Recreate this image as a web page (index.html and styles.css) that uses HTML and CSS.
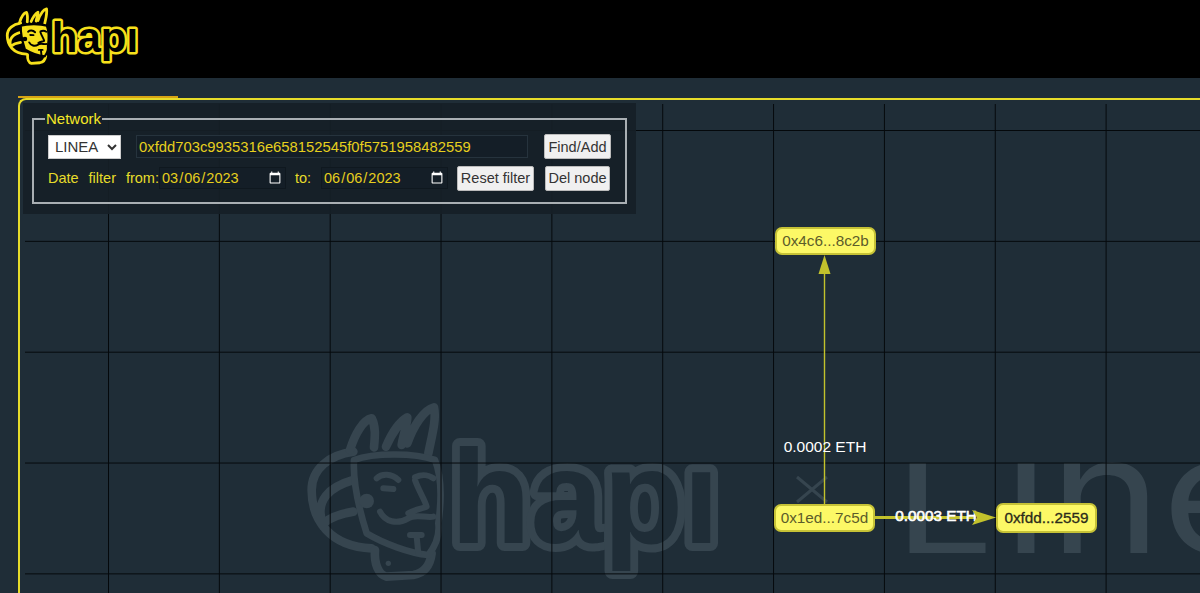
FILE: index.html
```html
<!DOCTYPE html>
<html lang="en">
  <head>
    <meta charset="UTF-8">
    <title>HAPI Explorer</title>
    <link rel="stylesheet" href="styles.css">
  </head>
  <body>
    <header class="topbar">
      <svg class="logo" viewBox="14 34 1252 542" aria-label="hapi">
        <defs>
          <g id="hapi-logo">
            <path class="logo-hair" d="M160,185 C90,195 35,235 35,300 C35,390 90,470 215,475 M160,270 C90,290 40,330 70,410 M160,365 C115,372 88,385 70,400"/>
            <path class="logo-hair" d="M150,180 C165,130 190,90 215,85 C228,110 225,140 222,172 M258,170 C275,130 300,95 322,82 C320,110 310,135 305,165 M322,160 C340,110 370,60 402,52 C410,90 395,140 385,190"/>
            <path class="logo-hair" d="M225,480 C222,520 235,555 260,560 L340,555 C370,550 390,530 395,490"/>
            <path class="logo-face" d="M162,210 C220,188 345,188 405,210 C425,260 425,330 415,400 C420,440 405,470 385,495 C330,490 250,460 200,430 C178,360 158,280 162,210 Z"/>
            <path class="logo-mark" d="M230,265 C245,250 275,250 295,270 M250,295 L280,297 M345,262 C370,250 385,255 400,265 M345,270 C355,300 375,330 380,350 C370,355 340,360 325,370 M240,365 C255,395 290,405 325,385 C345,370 380,385 400,380 M330,435 L365,435 M350,440 L355,490"/>
            <circle class="logo-dot" cx="200" cy="333" r="22"/>
            <circle class="logo-dot" cx="265" cy="520" r="8"/>
            <text class="logo-word" x="452" y="458" textLength="806" lengthAdjust="spacingAndGlyphs">hapı</text>
          </g>
        </defs>
        <use href="#hapi-logo"/>
      </svg>
    </header>

    <main class="workspace">
      <div class="tab-accent"></div>
      <section class="canvas">
        <div class="graph">
          <svg class="graph-svg" viewBox="25 104 1175 489">
            <use class="watermark" href="#hapi-logo" transform="translate(300 390) scale(0.3333)"/>
            <path class="cross" d="M797,477 L827,502 M827,477 L797,502"/>
            <text class="linea linea-l" x="894" y="553" textLength="100" lengthAdjust="spacingAndGlyphs">L</text>
            <text class="linea linea-rest" x="1003" y="553" textLength="270" lengthAdjust="spacingAndGlyphs">ıne</text>
          </svg>

          <div class="grid"></div>

          <svg class="graph-svg" viewBox="25 104 1175 489">
            <line class="edge" x1="824.5" y1="504" x2="824.5" y2="270"/>
            <polygon class="arrow" points="824.5,255 830.5,274 818.5,274"/>
            <text class="edge-label" x="825" y="452">0.0002 ETH</text>

            <line class="edge edge-thick" x1="875" y1="517.5" x2="975" y2="517.5"/>
            <text class="edge-label edge-label-strong" x="936" y="521">0.0003 ETH</text>
            <polygon class="arrow" points="996,517.5 972,510 977,517.5 972,525"/>
          </svg>

          <div class="node node-top">0x4c6...8c2b</div>
          <div class="node node-left">0x1ed...7c5d</div>
          <div class="node node-selected">0xfdd...2559</div>

          <form class="panel">
            <fieldset class="network">
              <legend>Network</legend>
              <div class="row">
                <select class="chain">
                  <option>LINEA</option>
                </select>
                <input class="address" type="text" value="0xfdd703c9935316e658152545f0f5751958482559">
                <button class="btn btn-find" type="button">Find/Add</button>
              </div>
              <div class="row row-dates">
                <label class="date-label" for="date-from"><span>Date</span><span>filter</span><span>from:</span></label>
                <input class="date" id="date-from" type="date" value="2023-03-06">
                <label class="to-label" for="date-to">to:</label>
                <input class="date" id="date-to" type="date" value="2023-06-06">
                <button class="btn btn-reset" type="button">Reset filter</button>
                <button class="btn btn-del" type="button">Del node</button>
              </div>
            </fieldset>
          </form>
        </div>
      </section>
    </main>
  </body>
</html>
```

FILE: styles.css
```css
* {padding: 0; margin: 0; box-sizing: border-box}
html, body {
  height: 100%;
  overflow: hidden;
}
body {
  background: #1f2d37;
  font-family: "Liberation Sans", Arial, sans-serif;
  font-size: 14px;
}

/* header */
.topbar {
  height: 78px;
  background: #000;
  padding: 7px 0 0 5px;
}
.logo {
  display: block;
  width: 134px;
  height: 58px;
  overflow: visible;
  --line: #f7e01b;
  --face: #f7e01b;
  --mark: #000;
  --word: #000;
}
#hapi-logo path, #hapi-logo text {
  stroke-linecap: round;
  stroke-linejoin: round;
}
.logo-hair {
  fill: none;
  stroke: var(--line);
  stroke-width: 26;
}
.logo-face {
  fill: var(--face);
  stroke: var(--mark);
  stroke-width: 20;
}
.logo-mark {
  fill: none;
  stroke: var(--mark);
  stroke-width: 18;
}
.logo-dot {
  fill: var(--mark);
}
.logo-word {
  font-family: "Liberation Sans", Arial, sans-serif;
  font-weight: 700;
  font-size: 400px;
  fill: var(--word);
  stroke: var(--line);
  stroke-width: 48;
  paint-order: stroke;
}

/* canvas */
.workspace {
  padding-top: 18px;
}
.tab-accent {
  width: 160px;
  height: 2px;
  margin-left: 18px;
  background: #d8a414;
}
.canvas {
  margin-left: 18px;
  height: 495px;
  border-top: 2px solid #e6dc2a;
  border-left: 2px solid #e6dc2a;
  border-radius: 8px 0 0 0;
  padding: 4px 0 0 5px;
}
.graph {
  position: relative;
  height: 100%;
}
.graph-svg {
  position: absolute;
  left: 0;
  top: 0;
  width: 1175px;
  height: 489px;
}
.grid {
  position: absolute;
  inset: 0;
  background-image:
    linear-gradient(to right, #04080b 1px, transparent 1px),
    linear-gradient(to bottom, #04080b 1px, transparent 1px);
  background-size: 110.85px 110.85px;
  background-position: 83px 26px;
}
.watermark {
  --line: #36454f;
  --face: none;
  --mark: #36454f;
  --word: #1f2d37;
}
.cross {
  fill: none;
  stroke: #36454f;
  stroke-width: 3;
}
.linea {
  font-family: Inter, "Liberation Sans", sans-serif;
  font-weight: 400;
  fill: #36454f;
}
.linea-l {
  font-size: 124px;
}
.linea-rest {
  font-size: 165px;
}
.edge {
  stroke: #c3c22c;
  stroke-width: 1.4;
}
.edge-thick {
  stroke-width: 3;
}
.arrow {
  fill: #c3c22c;
}
.edge-label {
  fill: #fff;
  font-size: 15.5px;
  text-anchor: middle;
}
.edge-label-strong {
  font-size: 15.3px;
  stroke: #fff;
  stroke-width: 0.6;
}

/* nodes on the graph */
.node {
  position: absolute;
  display: flex;
  align-items: center;
  justify-content: center;
  width: 101px;
  height: 28px;
  background: #fcf866;
  border: 2px solid #c6c236;
  border-radius: 7px;
  color: #5c5c2a;
  font-size: 15.3px;
}
.node-top {
  left: 750px;
  top: 123px;
}
.node-left {
  left: 749px;
  top: 400px;
}
.node-selected {
  left: 971px;
  top: 399px;
  height: 30px;
  color: #2b2b1a;
  -webkit-text-stroke: 0.3px #2b2b1a;
}

/* search panel */
.panel {
  position: absolute;
  left: -2px;
  top: -1px;
  width: 613px;
  height: 111px;
  padding: 8px 9px 0;
  background: rgba(21, 31, 39, 0.93);
  color: #e6dc2a;
}
.network {
  height: 93px;
  padding: 8px 14px 0;
  border: 2px solid #a9afb3;
  min-width: 0;
}
.network legend {
  margin-left: -3px;
  padding: 0 1px;
  font-size: 15px;
  color: #f5e826;
  line-height: 15px;
}
.row {
  display: flex;
  align-items: center;
  height: 25px;
}
.row-dates {
  height: 26px;
  margin-top: 6px;
}
.chain {
  width: 73px;
  height: 24px;
  background: #fff;
  border: 1px solid #ccc;
  color: #333;
  font-family: inherit;
  font-size: 15px;
  padding-left: 2px;
}
.address {
  width: 392px;
  height: 23px;
  margin: 0 16px 0 15px;
  padding: 0 2px;
  background: #141e27;
  border: 1px solid #26333d;
  color: #e6cf1e;
  font-family: inherit;
  font-size: 14.8px;
}
.date-label {
  display: flex;
  justify-content: space-between;
  width: 111px;
  font-size: 14.5px;
}
.to-label {
  width: 35px;
  padding-left: 9px;
  font-size: 14.5px;
}
.date {
  width: 127px;
  height: 22px;
  padding: 0 1px;
  background: #141e27;
  border: 1px solid #0f181f;
  color: #e6cf1e;
  color-scheme: dark;
  font-family: inherit;
  font-size: 14.5px;
}
.btn {
  height: 25px;
  background: #f0f0f0;
  border: 1px solid #bbb;
  border-radius: 2px;
  color: #333;
  font-family: inherit;
  font-size: 14.5px;
}
.btn-find {
  width: 67px;
}
.btn-reset {
  width: 77px;
  margin-left: 9px;
}
.btn-del {
  width: 65px;
  margin-left: 11px;
}
```
